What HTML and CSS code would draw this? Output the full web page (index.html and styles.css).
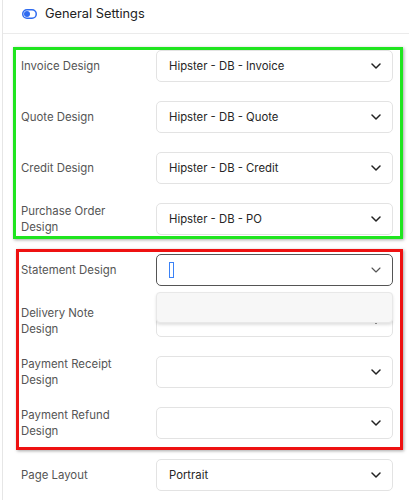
FILE: index.html
```html
<!DOCTYPE html>
<html lang="en">
	<head>
		<meta charset="UTF-8" />
		<meta name="viewport" content="width=device-width, initial-scale=1.0" />
		<title>General Settings</title>
		<link rel="stylesheet" href="styles.css">
	</head>
	<body>
		<div class="card">
			<header class="card-header">
				<svg class="toggle-icon" width="15" height="10" viewBox="0 0 15 10">
					<rect x="0.75" y="0.75" width="13.5" height="8.5" rx="4.25" fill="none" stroke="#2f6bf0" stroke-width="1.5" />
					<circle cx="5" cy="5" r="3" fill="#2f6bf0" />
				</svg>
				<h2>General Settings</h2>
			</header>
			<div class="card-body">
				<div class="group group-green">
					<div class="row">
						<label>Invoice Design</label>
						<div class="select"><span>Hipster - DB - Invoice</span><svg class="chevron" viewBox="0 0 10 6"><polyline points="1,1 5,5 9,1" /></svg></div>
					</div>
					<div class="row">
						<label>Quote Design</label>
						<div class="select"><span>Hipster - DB - Quote</span><svg class="chevron" viewBox="0 0 10 6"><polyline points="1,1 5,5 9,1" /></svg></div>
					</div>
					<div class="row">
						<label>Credit Design</label>
						<div class="select"><span>Hipster - DB - Credit</span><svg class="chevron" viewBox="0 0 10 6"><polyline points="1,1 5,5 9,1" /></svg></div>
					</div>
					<div class="row">
						<label>Purchase Order Design</label>
						<div class="select"><span>Hipster - DB - PO</span><svg class="chevron" viewBox="0 0 10 6"><polyline points="1,1 5,5 9,1" /></svg></div>
					</div>
				</div>
				<div class="group group-red">
					<div class="row">
						<label>Statement Design</label>
						<div class="select select-open">
							<span class="caret"></span><svg class="chevron" viewBox="0 0 10 6"><polyline points="1,1 5,5 9,1" /></svg>
							<div class="menu"></div>
						</div>
					</div>
					<div class="row">
						<label>Delivery Note Design</label>
						<div class="select"><span></span><svg class="chevron" viewBox="0 0 10 6"><polyline points="1,1 5,5 9,1" /></svg></div>
					</div>
					<div class="row">
						<label>Payment Receipt Design</label>
						<div class="select"><span></span><svg class="chevron" viewBox="0 0 10 6"><polyline points="1,1 5,5 9,1" /></svg></div>
					</div>
					<div class="row">
						<label>Payment Refund Design</label>
						<div class="select"><span></span><svg class="chevron" viewBox="0 0 10 6"><polyline points="1,1 5,5 9,1" /></svg></div>
					</div>
				</div>
				<div class="row row-plain">
					<label>Page Layout</label>
					<div class="select"><span>Portrait</span><svg class="chevron" viewBox="0 0 10 6"><polyline points="1,1 5,5 9,1" /></svg></div>
				</div>
			</div>
		</div>
	</body>
</html>
```

FILE: styles.css
```css
* {
	box-sizing: border-box;
}
body {
	margin: 0;
	background-color: #fff;
	font-family: Inter, "Noto Sans", sans-serif;
}
.card {
	margin-left: 2px;
	border-left: 1px solid #e6e6e6;
	height: 500px;
	overflow: hidden;
}
.card-header {
	display: flex;
	align-items: center;
	gap: 8px;
	height: 34px;
	padding: 0 0 6px 19px;
	border-bottom: 1px solid #ebebeb;
}
.card-header h2 {
	margin: 0;
	font-size: 12.8px;
	font-weight: 400;
	color: #222;
}
.card-body {
	padding: 13px 6px 0 10px;
}
.group {
	display: flex;
	flex-direction: column;
	gap: 19px;
	border: 3px solid;
	box-shadow: 1px 1px 3px rgba(0, 0, 0, 0.35);
}
.group-green {
	border-color: #1fe51f;
	padding: 0 7px 1px 5px;
}
.group-red {
	margin: 10px 0 0 3px;
	border-color: #ee1111;
	padding: 2px 7px 8px 2px;
}
.row {
	display: flex;
	align-items: center;
	min-height: 32px;
}
.row-plain {
	margin-top: 9px;
	padding-left: 8px;
	padding-right: 10px;
}
.row label {
	flex: 0 0 135px;
	padding-right: 28px;
	font-size: 11.4px;
	line-height: 16px;
	color: #555;
}
.select {
	position: relative;
	flex: 1;
	display: flex;
	align-items: center;
	height: 32px;
	padding: 0 11px 0 12px;
	border: 1px solid #e3e3e3;
	border-radius: 5px;
	font-size: 11.3px;
	color: #262626;
}
.select span {
	flex: 1;
}
.chevron {
	width: 10px;
	height: 6px;
	fill: none;
	stroke: #222;
	stroke-width: 1.5;
	stroke-linecap: round;
	stroke-linejoin: round;
}
.select-open {
	border-color: #555;
}
.caret {
	flex: 0 0 auto !important;
	width: 5px;
	height: 16px;
	border: 1px solid #3b82f6;
	margin-right: auto;
}
.select-open .chevron {
	stroke: #555;
	stroke-width: 1.1;
}
.menu {
	position: absolute;
	left: -1px;
	right: -1px;
	top: 37px;
	height: 31px;
	background-color: #f7f7f7;
	border: 1px solid #e8e8e8;
	border-radius: 4px;
	box-shadow: 0 2px 3px rgba(0, 0, 0, 0.12);
	z-index: 2;
}
```
